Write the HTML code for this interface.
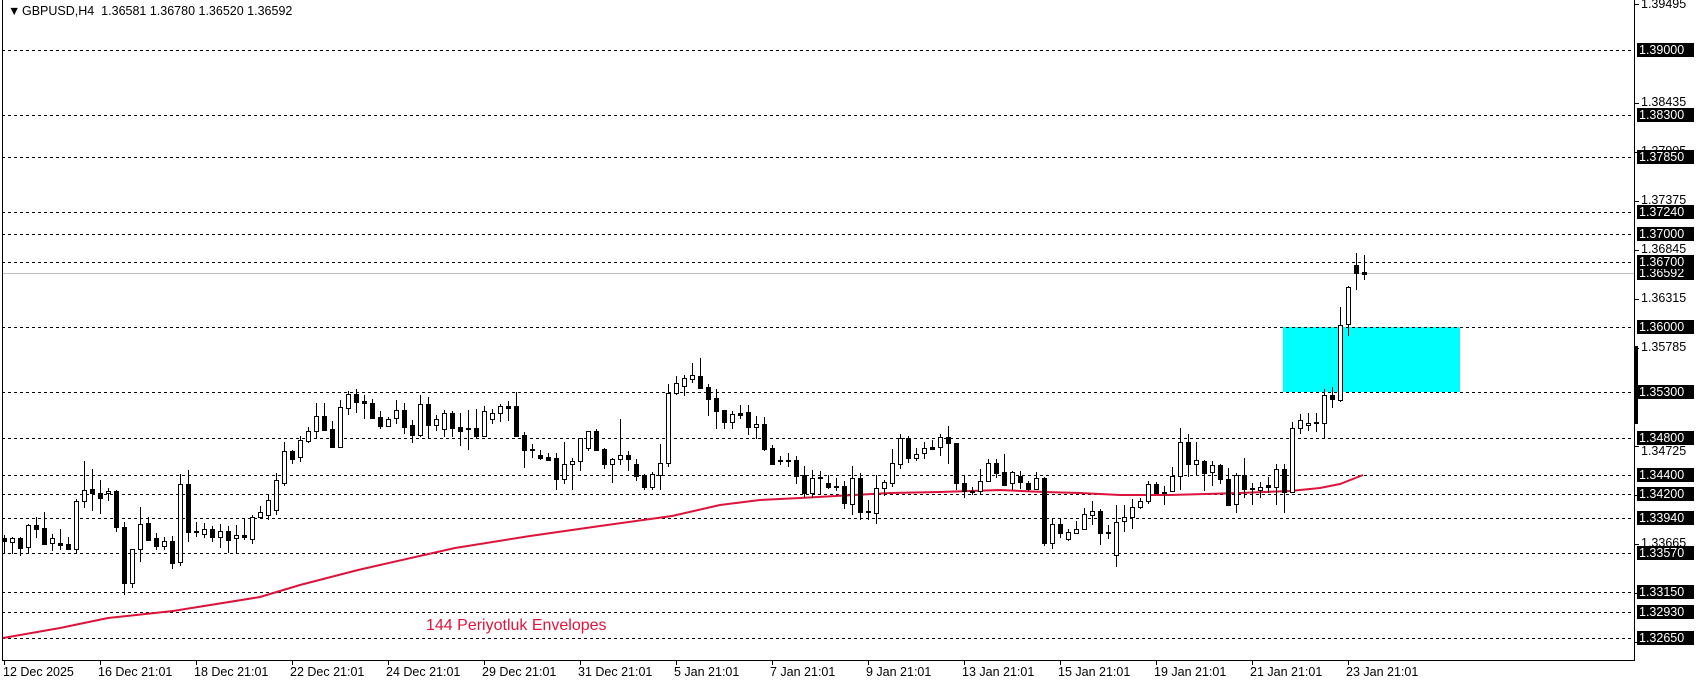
<!DOCTYPE html>
<html><head><meta charset="utf-8">
<style>
html,body{margin:0;padding:0;background:#fff;}
body{width:1699px;height:684px;position:relative;overflow:hidden;font-family:"Liberation Sans",Tahoma,sans-serif;}
.t{position:absolute;font-size:12.5px;color:#000;white-space:nowrap;line-height:14px;}
.pb{position:absolute;left:1637px;width:57px;height:14px;background:#000;color:#fff;font-size:12.5px;line-height:14px;padding-left:2px;box-sizing:border-box;}
.pl{position:absolute;left:1641px;font-size:12.5px;line-height:14px;color:#000;}
.dl{position:absolute;top:665px;font-size:12.5px;line-height:14px;color:#000;white-space:nowrap;}
</style></head><body>
<svg id="s" width="1699" height="684" style="position:absolute;left:0;top:0" shape-rendering="crispEdges"></svg>
<div class="t" style="left:8px;top:4px;">▼</div>
<div class="t" style="left:22px;top:4px;">GBPUSD,H4&nbsp;&nbsp;1.36581 1.36780 1.36520 1.36592</div>
<div class="t" style="left:426px;top:616px;font-size:16px;line-height:19px;color:#e0143c;">144 Periyotluk Envelopes</div>

<div class="pl" style="top:-3px">1.39495</div>
<div class="pl" style="top:95px">1.38435</div>
<div class="pl" style="top:144px">1.37905</div>
<div class="pl" style="top:193px">1.37375</div>
<div class="pl" style="top:242px">1.36845</div>
<div class="pl" style="top:291px">1.36315</div>
<div class="pl" style="top:340px">1.35785</div>
<div class="pl" style="top:444px">1.34725</div>
<div class="pl" style="top:536px">1.33665</div>

<div class="pb" style="top:43px">1.39000</div>
<div class="pb" style="top:108px">1.38300</div>
<div class="pb" style="top:150px">1.37850</div>
<div class="pb" style="top:205px">1.37240</div>
<div class="pb" style="top:227px">1.37000</div>
<div class="pb" style="top:266px">1.36592</div>
<div class="pb" style="top:255px">1.36700</div>
<div class="pb" style="top:320px">1.36000</div>
<div class="pb" style="top:385px">1.35300</div>
<div class="pb" style="top:431px">1.34800</div>
<div class="pb" style="top:468px">1.34400</div>
<div class="pb" style="top:487px">1.34200</div>
<div class="pb" style="top:511px">1.33940</div>
<div class="pb" style="top:546px">1.33570</div>
<div class="pb" style="top:585px">1.33150</div>
<div class="pb" style="top:605px">1.32930</div>
<div class="pb" style="top:631px">1.32650</div>

<div class="dl" style="left:3px">12 Dec 2025</div>
<div class="dl" style="left:98px">16 Dec 21:01</div>
<div class="dl" style="left:194px">18 Dec 21:01</div>
<div class="dl" style="left:290px">22 Dec 21:01</div>
<div class="dl" style="left:386px">24 Dec 21:01</div>
<div class="dl" style="left:482px">29 Dec 21:01</div>
<div class="dl" style="left:578px">31 Dec 21:01</div>
<div class="dl" style="left:674px">5 Jan 21:01</div>
<div class="dl" style="left:770px">7 Jan 21:01</div>
<div class="dl" style="left:866px">9 Jan 21:01</div>
<div class="dl" style="left:962px">13 Jan 21:01</div>
<div class="dl" style="left:1058px">15 Jan 21:01</div>
<div class="dl" style="left:1154px">19 Jan 21:01</div>
<div class="dl" style="left:1250px">21 Jan 21:01</div>
<div class="dl" style="left:1346px">23 Jan 21:01</div>

<script>
(function(){
var s=document.getElementById('s'),h='';
function R(x,y,w,hh,c){h+='<rect x="'+x+'" y="'+y+'" width="'+w+'" height="'+hh+'" fill="'+c+'"/>';}
R(1283,327,177,65,'#00ffff');
R(2,273,1633,1,'#c0c0c0');
var lv=[50,115,157,212,234,262,327,392,438,475,494,518,553,592,612,638];
lv.forEach(function(y){h+='<line x1="2" y1="'+(y+0.5)+'" x2="1635" y2="'+(y+0.5)+'" stroke="#000" stroke-width="1" stroke-dasharray="3,3"/>';});
R(2,0,1,661,'#000');R(1634,0,1,661,'#000');R(2,660,1633,1,'#000');
R(1634,346,4,78,'#000');
[4,103,152,201,250,299,348,397,446,495,544,593,642].forEach(function(y){R(1635,y,4,1,'#000');});
for(var k=0;k<15;k++){R(4+96*k,661,1,4,'#000');}
var z3=[[383,392,375,430,1],[385,397,380,433,0],[384,413,380,437,1],[345,412,343,428,0],[345,356,322,383,1],[354,401,306,406,1],[384,400,372,422,0],[399,404,357,420,1],[403,418,381,418,1],[273,418,268,433,0],[241,274,153,293,0],[238,250,177,302,1],[250,263,210,312,1],[243,250,235,272,0],[243,352,240,365,1],[351,518,337,555,1],[418,518,418,533,0],[342,418,291,455,0],[340,389,322,392,1],[384,407,369,420,1],[394,407,381,420,0],[393,458,378,477,1],[222,457,193,467,0],[222,365,180,395,1],[363,367,336,381,1],[357,373,340,384,0],[357,380,349,395,1],[363,380,343,413,0],[363,389,349,430,1],[375,385,345,432,0],[375,380,327,389,1],[322,388,316,401,0]];
var d=z3.map(function(a){return [410+a[0]/3,410+a[1]/3,410+a[2]/3,410+a[3]/3,a[4]];});
d=d.concat([[512,517,506,519,0],[500,515,495,520,0],[480,510,473,515,0],[451,483,442,486,0],[451,459,450,464,1],[440,457,436,462,0],[431,441,427,443,0],[416,431,403,439,0],[416,430,403,430,1],[429,447,421,448,1],[407,447,400,448,0],[394,408,391,415,0],[394,402,389,413,1],[401,403,395,419,1],[403,418,399,419,1],[417,426,411,429,1],[419,426,417,427,0],[410,418,400,424,0],[410,427,403,434,1],[425,435,420,443,1],[404,435,395,437,0],[404,425,397,438,1],[419,425,415,431,0],[413,429,410,437,0],[413,428,411,437,1],[427,431,413,446,1],[428,429,410,450,1],[428,436,409,438,1],[411,436,406,436,0],[413,419,409,424,0],[406,413,404,422,0],[406,408,401,421,1],[406,436,392,436,1],[435,450,432,468,1],[449,450,444,458,1],[455,458,450,460,1],[457,460,453,461,1],[458,479,453,490,1],[464,479,442,484,0],[461,464,458,490,0],[438,461,438,471,0],[431,448,431,451,0],[431,450,429,450,1],[449,464,448,469,1],[459,464,458,483,0],[455,459,419,465,0],[455,459,451,471,1],[464,476,459,481,1],[475,487,474,490,1],[474,487,472,490,0],[463,475,444,490,0],[393,463,384,467,0],[383,393,376,395,0],[378,386,375,396,0],[375,379,363,383,0],[376,388,358,389,1],[387,399,384,416,1],[398,411,389,429,1],[410,422,410,429,1],[414,422,411,429,0],[413,415,405,419,1],[412,427,405,435,1],[424,427,416,439,0],[424,449,417,451,1],[448,464,445,465,1],[460,461,456,465,1],[460,461,453,467,1],[460,476,456,484,1],[475,493,466,498,1],[478,493,470,498,0],[477,478,471,495,1],[483,487,475,489,1],[486,487,478,491,1],[486,503,481,509,1],[478,504,466,515,0],[478,512,473,520,1],[511,512,500,520,1],[488,513,475,524,0],[482,488,480,496,0],[463,483,449,487,0],[438,464,434,469,0],[438,458,436,463,1],[454,458,448,461,0],[448,453,442,459,0],[447,449,440,450,1],[437,447,434,456,0],[437,443,426,464,1],[443,483,443,490,1],[483,491,476,498,1],[491,492,487,495,1],[481,491,469,495,0],[463,481,459,481,0],[463,473,459,478,1],[472,485,454,486,1],[472,483,471,490,0],[476,482,471,489,1],[483,489,481,491,1],[478,489,472,490,0],[478,543,477,546,1],[524,543,519,549,0],[524,533,519,538,1],[532,539,529,541,0],[529,533,521,534,0],[514,529,508,530,0],[511,515,501,525,0],[511,533,509,545,1],[532,533,525,539,1],[522,555,505,567,0],[517,521,505,532,0],[507,517,499,529,0],[501,507,498,509,0],[484,501,481,504,0],[484,493,482,493,1],[492,493,486,505,1],[476,491,467,492,0],[442,476,428,490,0],[442,464,434,477,1],[460,464,442,476,0],[461,473,460,491,1],[465,472,461,486,0],[465,479,464,484,1],[479,505,468,506,1],[475,504,473,513,0],[475,489,458,498,1],[488,489,483,505,0],[487,490,482,498,0],[485,487,477,493,1],[469,487,464,505,0],[469,492,464,513,1],[428,492,422,492,0],[420,428,414,434,0],[423,425,413,431,0],[422,423,413,432,1],[395,423,389,438,0],[395,399,387,408,1],[325,400,307,402,0],[287,324,286,336,0],[265,273,253,290,1],[272,274,255,280,1]]);
var pts=[[3,638],[60,628],[108,618],[173,611],[260,597],[300,585],[358,570],[455,548],[530,536],[600,526],[672,516],[720,505],[760,500],[800,498],[890,493],[940,492],[1000,490],[1044,492],[1080,493],[1120,495],[1170,495],[1240,493],[1290,491],[1320,488],[1340,484],[1363,475]];
var cs='';
d.forEach(function(a,i){
 var cx=4+8*i,t=Math.round(a[0]),b=Math.round(a[1]),hi=Math.round(a[2]),lo=Math.round(a[3]);
 if(b<=t)b=t+1;
 cs+='<rect x="'+cx+'" y="'+hi+'" width="1" height="'+Math.max(1,lo-hi)+'" fill="#000"/>';
 cs+='<rect x="'+(cx-2)+'" y="'+t+'" width="5" height="'+(b-t+1)+'" fill="#000"/>';
 if(!a[4]&&b-t>1)cs+='<rect x="'+(cx-1)+'" y="'+(t+1)+'" width="3" height="'+(b-t-1)+'" fill="#fff"/>';
});
h+='<polyline points="'+pts.map(function(p){return p.join(',');}).join(' ')+'" fill="none" stroke="#dc143c" stroke-width="2" shape-rendering="auto"/>';
h+=cs;
s.innerHTML=h;
})();
</script>
</body></html>
